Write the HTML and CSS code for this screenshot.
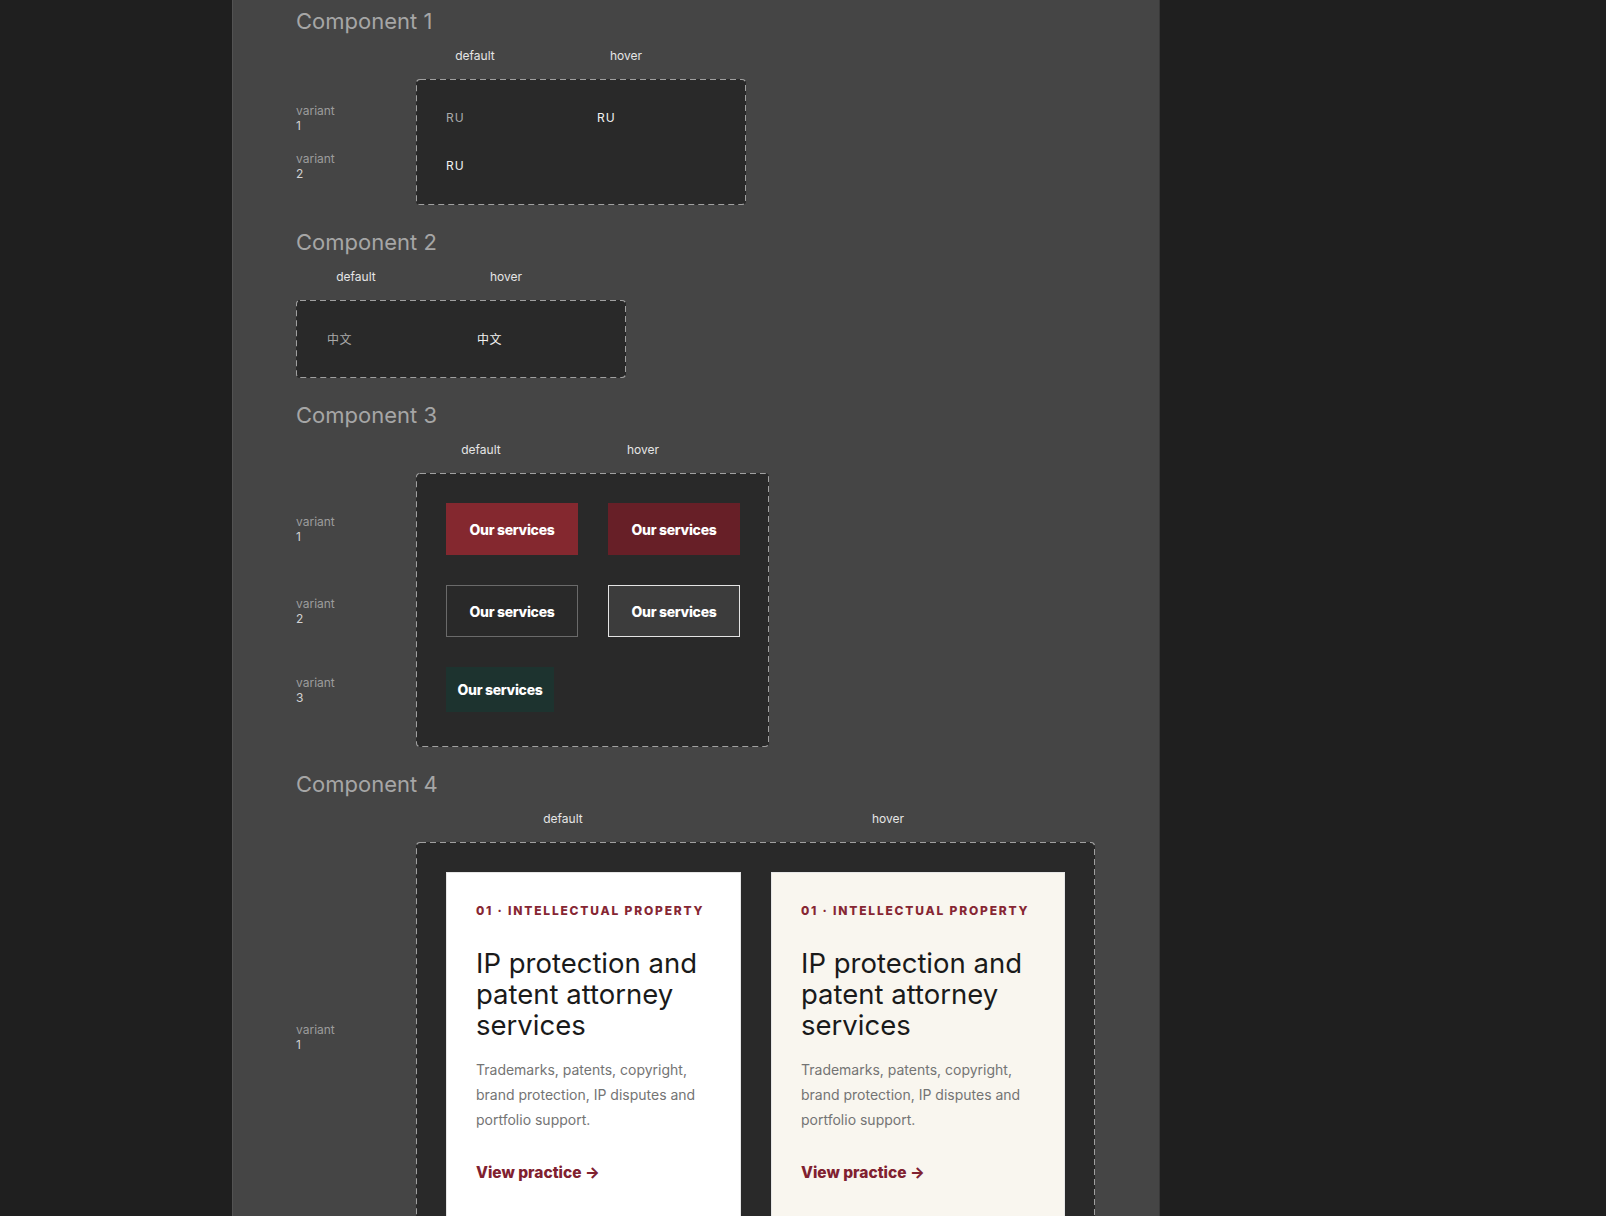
FILE: index.html
```html
<!DOCTYPE html>
<html lang="en">

<head>
  <meta charset="utf-8">
  <title>Components</title>
  <link rel="icon" href="data:,">
  <link rel="stylesheet" href="styles.css">
</head>

<body>
  <main class="canvas">

    <!-- language switch, latin -->
    <section class="component">
      <h2 class="component-title">Component 1</h2>
      <div class="states states--lang">
        <span>default</span>
        <span>hover</span>
      </div>
      <div class="component-body">
        <div class="variants rows-lang">
          <div class="variant-label">variant<span>1</span></div>
          <div class="variant-label">variant<span>2</span></div>
        </div>
        <div class="frame frame--lang rows-lang">
          <span class="lang">RU</span>
          <span class="lang lang--hover">RU</span>
          <span class="lang lang--active">RU</span>
        </div>
      </div>
    </section>

    <!-- language switch, chinese -->
    <section class="component">
      <h2 class="component-title">Component 2</h2>
      <div class="states states--cjk">
        <span>default</span>
        <span>hover</span>
      </div>
      <div class="frame frame--cjk">
        <span class="lang lang--cjk">中文</span>
        <span class="lang lang--cjk lang--hover">中文</span>
      </div>
    </section>

    <!-- buttons -->
    <section class="component">
      <h2 class="component-title">Component 3</h2>
      <div class="states states--btn">
        <span>default</span>
        <span>hover</span>
      </div>
      <div class="component-body">
        <div class="variants rows-btn">
          <div class="variant-label">variant<span>1</span></div>
          <div class="variant-label">variant<span>2</span></div>
          <div class="variant-label">variant<span>3</span></div>
        </div>
        <div class="frame frame--btn rows-btn">
          <a class="btn btn--primary">Our services</a>
          <a class="btn btn--primary is-hover">Our services</a>
          <a class="btn btn--outline">Our services</a>
          <a class="btn btn--outline is-hover">Our services</a>
          <a class="btn btn--green">Our services</a>
        </div>
      </div>
    </section>

    <!-- practice card -->
    <section class="component">
      <h2 class="component-title">Component 4</h2>
      <div class="states states--card">
        <span>default</span>
        <span>hover</span>
      </div>
      <div class="component-body">
        <div class="variants rows-card">
          <div class="variant-label">variant<span>1</span></div>
        </div>
        <div class="frame frame--card">
          <article class="card">
            <p class="card-eyebrow">01 · Intellectual property</p>
            <h3 class="card-title">IP protection and patent attorney services</h3>
            <p class="card-text">Trademarks, patents, copyright, brand protection, IP disputes and portfolio support.</p>
            <a class="card-link">View practice →</a>
          </article>
          <article class="card is-hover">
            <p class="card-eyebrow">01 · Intellectual property</p>
            <h3 class="card-title">IP protection and patent attorney services</h3>
            <p class="card-text">Trademarks, patents, copyright, brand protection, IP disputes and portfolio support.</p>
            <a class="card-link">View practice →</a>
          </article>
        </div>
      </div>
    </section>

  </main>
</body>

</html>
```

FILE: styles.css
```css
body {
  margin: 0;
  font-family: Inter, "Noto Sans CJK SC", sans-serif;
  background: #1f1f1f;
  color: #e6e6e6;
}

.canvas {
  box-sizing: border-box;
  width: 928px;
  min-height: 100vh;
  margin-left: 232px;
  padding: 5px 0 0 63px;
  background: #454545;
  border-left: 1px solid #525252;
  border-right: 1px solid #383838;
}

.component {
  margin-bottom: 21px;
}

.component-title {
  margin: 0 0 12px;
  padding-top: 1px;
  font-size: 22px;
  line-height: 30px;
  font-weight: 400;
  color: #a6a6a6;
}

/* state captions above the frames */
.states {
  display: grid;
  margin-bottom: 16px;
  font-size: 12px;
  line-height: 15px;
  color: #e6e6e6;
}

.states span {
  text-align: center;
}

.states--lang {
  grid-template-columns: 58px 58px;
  column-gap: 93px;
  padding-left: 150px;
}

.states--cjk {
  grid-template-columns: 58px 58px;
  column-gap: 92px;
  padding-left: 31px;
}

.states--btn {
  grid-template-columns: 70px 70px;
  column-gap: 92px;
  padding-left: 150px;
}

.states--card {
  grid-template-columns: 234px 234px;
  column-gap: 91px;
  padding-left: 150px;
}

.component-body {
  display: flex;
  align-items: flex-start;
}

.variants {
  display: grid;
  width: 120px;
  padding-top: 30px;
}

.variant-label {
  align-self: center;
  font-size: 12px;
  line-height: 15px;
  color: #9c9c9c;
}

.variant-label span {
  display: block;
  color: #d2d2d2;
}

/* dashed frame, 6/4 dash like the design tool draws it */
.frame {
  box-sizing: border-box;
  display: grid;
  border-radius: 4px;
  background: #292929 url("data:image/svg+xml,%3Csvg xmlns='http://www.w3.org/2000/svg'%3E%3Crect width='100%25' height='100%25' rx='4' fill='none' stroke='%23a0a0a0' stroke-width='2' stroke-dasharray='6 4'/%3E%3C/svg%3E");
}

.rows-lang {
  grid-template-rows: 18px 18px;
  row-gap: 30px;
}

.rows-btn {
  grid-template-rows: 52px 52px 45px;
  row-gap: 30px;
}

.rows-card {
  grid-template-rows: 330px;
}

.frame--lang {
  width: 330px;
  padding: 30px;
  grid-template-columns: 151px auto;
}

.frame--cjk {
  width: 330px;
  padding: 30px 30px 30px 31px;
  grid-template-columns: 150px auto;
  grid-template-rows: 18px;
}

.frame--btn {
  width: 353px;
  padding: 30px 29px 35px 30px;
  grid-template-columns: 132px 132px;
  column-gap: 30px;
}

.frame--card {
  width: 679px;
  padding: 30px;
  grid-template-columns: 295px 294px;
  column-gap: 30px;
}

.lang {
  font-size: 12px;
  line-height: 18px;
  letter-spacing: 1px;
  color: #a9a9a9;
}

.lang--hover,
.lang--active {
  color: #f2f2f2;
}

.lang--cjk {
  font-family: "Noto Sans CJK SC", sans-serif;
  letter-spacing: 0.5px;
}

/* buttons */
.btn {
  box-sizing: border-box;
  display: flex;
  align-items: center;
  justify-content: center;
  width: 132px;
  height: 52px;
  font-size: 14px;
  font-weight: 800;
  letter-spacing: -0.3px;
  color: #fff;
  cursor: pointer;
}

.btn--primary {
  background: #84282f;
}

.btn--primary.is-hover {
  background: #671f27;
}

.btn--outline {
  border: 1px solid #6a6a6a;
}

.btn--outline.is-hover {
  background: #3c3c3c;
  border-color: #e4e4e4;
}

.btn--green {
  width: 108px;
  height: 45px;
  background: #1d332f;
}

/* practice card */
.card {
  padding: 30px 29px 60px;
  background: #fff;
  border: 1px solid #e6e6e6;
}

.card.is-hover {
  background: #f9f6ef;
}

.card-eyebrow {
  margin: 0 0 29px;
  font-size: 12px;
  line-height: 16px;
  font-weight: 800;
  letter-spacing: 1.8px;
  text-transform: uppercase;
  white-space: nowrap;
  color: #862633;
}

.card-title {
  margin: 0 0 16px;
  font-size: 27.5px;
  line-height: 31px;
  font-weight: 400;
  color: #1a1a1a;
}

.card-text {
  margin: 0 0 30px;
  font-size: 14px;
  line-height: 25px;
  color: #747474;
}

.card-link {
  display: block;
  font-size: 15.5px;
  line-height: 21px;
  font-weight: 800;
  color: #802130;
  cursor: pointer;
}
```
